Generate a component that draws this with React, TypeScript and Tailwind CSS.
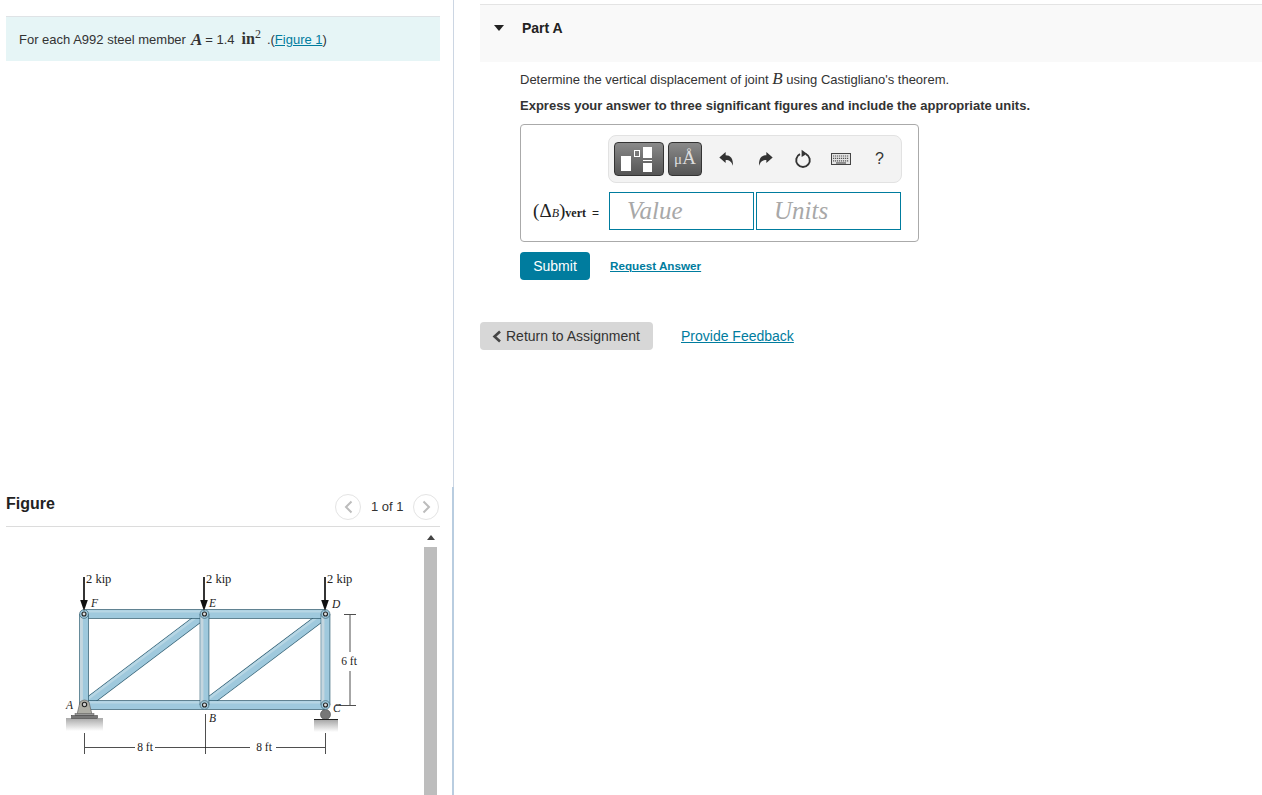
import React from "react";

const sans = { fontFamily: '"Liberation Sans", Arial, sans-serif' };
const mathFont = { fontFamily: '"Liberation Serif", serif' };

const UndoIcon = ({ flip }: { flip?: boolean }) => (
  <svg width="15" height="16" viewBox="0 0 14 14" className={flip ? "-scale-x-100" : ""}>
    <path d="M0.3 5.5 L6.2 0.4 V3.4 C10.8 3.4 13.4 6.4 13 13.4 C11.8 9.8 10 8 6.2 8 V10.8 Z" fill="#333" />
  </svg>
);

const ResetIcon = () => (
  <svg width="18" height="20" viewBox="0 0 18 19">
    <path d="M6 4.6 A6.8 6.8 0 1 0 12 4.6" fill="none" stroke="#333" strokeWidth="1.9" />
    <path d="M7.6 0.2 L13 4.2 L7.6 7.6 Z" fill="#333" />
  </svg>
);

const KeyboardIcon = () => (
  <svg width="20" height="12" viewBox="0 0 20 12">
    <rect x="0.5" y="0.5" width="19" height="11" fill="#e4e4e4" stroke="#444" />
    <path d="M2 3h16M2 5.4h16" stroke="#555" strokeWidth="1.2" strokeDasharray="1.2 .8" />
    <path d="M2 7.8h16" stroke="#555" strokeWidth="1.2" strokeDasharray="1.2 .8" />
    <path d="M5 10h10" stroke="#555" strokeWidth="1.2" />
  </svg>
);

const Member = ({ x1, y1, x2, y2 }: { x1: number; y1: number; x2: number; y2: number }) => {
  const len = Math.hypot(x2 - x1, y2 - y1);
  // offset along the member's normal, so the lit edge always faces up and left
  let nx = (y2 - y1) / len;
  let ny = -(x2 - x1) / len;
  if (nx + ny > 0) {
    nx = -nx;
    ny = -ny;
  }
  const vertical = x1 === x2;
  return (
    <g>
      <line x1={x1} y1={y1} x2={x2} y2={y2} stroke="#2c5a6e" strokeWidth="9.6" />
      <line x1={x1} y1={y1} x2={x2} y2={y2} stroke="#9fc9dd" strokeWidth="8.2" />
      <line
        x1={x1 + nx * 2.6}
        y1={y1 + ny * 2.6}
        x2={x2 + nx * 2.6}
        y2={y2 + ny * 2.6}
        stroke={vertical ? "#c4d6df" : "#b7d6e4"}
        strokeWidth={vertical ? 3 : 2.4}
      />
    </g>
  );
};

const Pin = ({ x, y }: { x: number; y: number }) => (
  <g>
    <circle cx={x} cy={y} r="4.4" fill="#9fc9dd" stroke="#3d6475" strokeWidth="0.7" />
    <circle cx={x} cy={y} r="2" fill="#ddd" stroke="#222" strokeWidth="1.1" />
  </g>
);

const Load = ({ x, label }: { x: number; label: string }) => (
  <g>
    <line x1={x} y1="577" x2={x} y2="602" stroke="#111" strokeWidth="1.7" />
    <path d={`M${x - 3.8} 600 L${x + 3.8} 600 L${x} 611 Z`} fill="#111" />
    <text x={x + 2} y="583" fontSize="12.5" fill="#222" fontFamily="Liberation Serif, serif">{label}</text>
  </g>
);

const Truss = () => {
  const serif = "Liberation Serif, serif";
  return (
    <svg width="370" height="240" viewBox="0 556 370 240" className="block">
      <defs>
        <linearGradient id="ground" x1="0" y1="0" x2="0" y2="1">
          <stop offset="0" stopColor="#a8a8a8" />
          <stop offset="1" stopColor="#ffffff" />
        </linearGradient>
      </defs>
      <rect x="66" y="718" width="37" height="13" fill="url(#ground)" />
      <rect x="314" y="720" width="24" height="12" fill="url(#ground)" />

      <Member x1={204.5} y1={614} x2={84} y2={705} />
      <Member x1={325.5} y1={614} x2={204.5} y2={705} />
      <Member x1={84} y1={705} x2={325.5} y2={705} />
      <Member x1={84} y1={614} x2={325.5} y2={614} />
      <Member x1={84} y1={614} x2={84} y2={705} />
      <Member x1={204.5} y1={614} x2={204.5} y2={705} />
      <Member x1={325.5} y1={614} x2={325.5} y2={705} />

      <path d="M80 702 Q84.5 698 89 702 L92 714.5 H77 Z" fill="#aeaea6" stroke="#555" strokeWidth="0.6" />
      <rect x="75" y="713.5" width="19" height="2" fill="#999" stroke="#444" strokeWidth="0.4" />
      <rect x="71.5" y="715.5" width="26" height="2.8" fill="#777" stroke="#333" strokeWidth="0.5" />
      <circle cx="325.5" cy="714.5" r="5" fill="#777" stroke="#444" strokeWidth="0.6" />
      <line x1="314" y1="719.5" x2="338" y2="719.5" stroke="#222" />

      <Pin x={84} y={614} />
      <Pin x={204.5} y={614} />
      <Pin x={325.5} y={614} />
      <circle cx="84.5" cy="704.5" r="2.2" fill="#ccc" stroke="#222" strokeWidth="1.1" />
      <Pin x={204.5} y={705} />
      <Pin x={325.5} y={705} />

      <Load x={84} label="2 kip" />
      <Load x={204} label="2 kip" />
      <Load x={325} label="2 kip" />

      <g fontFamily={serif} fontSize="11.5" fontStyle="italic" fill="#222">
        <text x="91" y="607">F</text>
        <text x="209" y="607">E</text>
        <text x="332" y="608">D</text>
        <text x="66" y="709">A</text>
        <text x="209" y="722">B</text>
        <text x="333" y="712">C</text>
      </g>

      <g stroke="#222" strokeWidth="0.8">
        <line x1="344" y1="614.5" x2="356" y2="614.5" />
        <line x1="336" y1="705.5" x2="356" y2="705.5" />
        <line x1="350" y1="615" x2="350" y2="652" />
        <line x1="350" y1="671" x2="350" y2="705" />
        <line x1="84.5" y1="733" x2="84.5" y2="754" />
        <line x1="205.5" y1="714" x2="205.5" y2="754" />
        <line x1="325.5" y1="733" x2="325.5" y2="754" />
        <line x1="85" y1="747.5" x2="135" y2="747.5" />
        <line x1="155" y1="747.5" x2="250" y2="747.5" />
        <line x1="276" y1="747.5" x2="325" y2="747.5" />
      </g>
      <g fontFamily={serif} fontSize="11.5" fill="#222" textAnchor="middle">
        <text x="349" y="665">6 ft</text>
        <text x="145" y="751">8 ft</text>
        <text x="264" y="751">8 ft</text>
      </g>
    </svg>
  );
};

export default function App() {
  return (
    <div className="flex h-[795px] w-[1262px] overflow-hidden bg-white text-[13px] text-[#333]" style={sans}>
      {/* left column */}
      <div className="relative flex w-[454px] shrink-0 flex-col border-r border-[#ccd6e3] pl-1.5 pr-[13px]">
        <div className="absolute right-[-1px] top-[487px] bottom-0 w-[2px] bg-[#b9cde0]" />
        <div className="mt-4 flex h-[45px] shrink-0 items-center border-t border-[#dfe3e6] bg-[#e6f5f6] pl-[13px] leading-none">
          <span>For each A992 steel member</span>
          <span className="ml-[5px] text-[17px] font-bold italic" style={mathFont}>A</span>
          <span className="ml-[3px]">= 1.4</span>
          <span className="ml-[7px] text-[16px] font-bold" style={mathFont}>in</span>
          <span className="-mt-2.5 text-[12px]" style={mathFont}>2</span>
          <span className="ml-[6px]">.(</span>
          <a className="text-[#007c9e] underline">Figure 1</a>
          <span>)</span>
        </div>

        <div className="mt-[425px] flex h-[41px] shrink-0 items-center justify-between border-b border-[#dcdcdc] pb-[5px]">
          <h2 className="text-base font-bold text-[#222]">Figure</h2>
          <div className="flex items-center gap-[9.5px] pr-px pt-1.5">
            <button className="flex size-[26px] items-center justify-center rounded-full border border-[#e4e4e4]">
              <svg width="9" height="14" viewBox="0 0 9 14"><path d="M7.5 1.5 L2 7 L7.5 12.5" fill="none" stroke="#bcbcbc" strokeWidth="2" /></svg>
            </button>
            <span className="text-[#333]">1 of 1</span>
            <button className="flex size-[26px] items-center justify-center rounded-full border border-[#e4e4e4]">
              <svg width="9" height="14" viewBox="0 0 9 14"><path d="M1.5 1.5 L7 7 L1.5 12.5" fill="none" stroke="#bcbcbc" strokeWidth="2" /></svg>
            </button>
          </div>
        </div>

        <div className="relative flex min-h-0 flex-1">
          <div className="-ml-1.5 mt-[29px]">
            <Truss />
          </div>
          <div className="absolute right-[2px] top-0 flex h-full w-[15px] flex-col items-center">
            <svg width="8" height="5" viewBox="0 0 8 5" className="mt-2"><path d="M0 5 L4 0 L8 5 Z" fill="#444" /></svg>
            <div className="mt-[7px] w-[13px] flex-1 bg-[#bdbdbd]" />
          </div>
        </div>
      </div>

      {/* right column */}
      <div className="flex-1 pl-[26px] pt-1">
        <div className="flex h-[58px] border-t border-[#e4e4e4] bg-[#f9f9f9] pl-[14px] pt-[15px]">
          <svg width="10" height="6" viewBox="0 0 10 6" className="mt-[5px]"><path d="M0 0 H10 L5 6 Z" fill="#222" /></svg>
          <span className="ml-[18px] text-sm font-bold leading-4 text-[#222]">Part A</span>
        </div>

        <div className="pl-10">
          <p className="mt-[9px] leading-4">
            Determine the vertical displacement of joint{" "}
            <span className="text-[17px] italic" style={mathFont}>B</span> using Castigliano&apos;s theorem.
          </p>
          <p className="mt-2.5 font-bold leading-4">Express your answer to three significant figures and include the appropriate units.</p>

          <div className="mt-2.5 flex h-[118px] w-[399px] flex-col rounded border border-[#aaa] pt-2.5">
            <div className="ml-[87px] flex h-[48px] w-[294px] items-center rounded-lg border border-[#e2e2e2] bg-[#f3f3f3] pl-[5px]">
              <div className="flex h-[34px] w-[50px] items-center justify-center gap-[3px] rounded border border-[#333] bg-gradient-to-b from-[#8a8a8a] to-[#555] pr-[5px]">
                <div className="mt-[9px] h-[15px] w-[10px] bg-white" />
                <div className="mb-[11px] h-[7px] w-[6px] border border-white" />
                <div className="flex flex-col gap-[2px]">
                  <div className="h-[11px] w-[9px] bg-white" />
                  <div className="h-px w-[9px] bg-white" />
                  <div className="h-[9px] w-[9px] bg-white" />
                </div>
              </div>
              <div className="ml-[4px] flex h-[34px] w-[34px] items-baseline justify-center rounded border border-[#333] bg-gradient-to-b from-[#8a8a8a] to-[#555] pt-[5px] text-[#ddd]" style={mathFont}>
                <span className="text-[15px]">μ</span>
                <span className="text-[19px] leading-none">Å</span>
              </div>
              <div className="ml-[17px] flex"><UndoIcon /></div>
              <div className="ml-[24px] flex"><UndoIcon flip /></div>
              <div className="ml-[21px] flex"><ResetIcon /></div>
              <div className="ml-[19px] flex"><KeyboardIcon /></div>
              <span className="ml-[24px] text-base text-[#333]">?</span>
            </div>

            <div className="mt-[9px] flex items-center">
              <div className="flex w-[88px] items-baseline justify-end pr-2.5 text-[#222]" style={mathFont}>
                <span className="text-[19px]">(Δ</span>
                <span className="text-[12px] italic">B</span>
                <span className="text-[19px]">)</span>
                <span className="text-[12px] font-bold">vert</span>
                <span className="ml-1.5 text-xs" style={sans}>=</span>
              </div>
              <div className="flex h-[38px] w-[145px] items-center border border-[#007c9e] pl-[17px] text-[25px] italic text-[#a8a8a8]" style={mathFont}>Value</div>
              <div className="ml-0.5 flex h-[38px] w-[145px] items-center border border-[#007c9e] pl-[17px] text-[25px] italic text-[#a8a8a8]" style={mathFont}>Units</div>
            </div>
          </div>

          <div className="mt-2.5 flex items-center">
            <button className="h-7 w-[70px] rounded-sm bg-[#007c9e] text-sm text-white">Submit</button>
            <a className="ml-5 -mt-px text-[11.7px] font-bold text-[#007c9e] underline">Request Answer</a>
          </div>
        </div>

        <div className="mt-[42px] flex items-center text-sm">
          <button className="flex h-7 w-[173px] items-center rounded-sm bg-[#d7d7d7] pl-3 text-[#333]">
            <svg width="10" height="13" viewBox="0 0 10 13" className="mr-1"><path d="M8 1.5 L2.5 6.5 L8 11.5" fill="none" stroke="#444" strokeWidth="2.6" /></svg>
            Return to Assignment
          </button>
          <a className="ml-7 text-[#007c9e] underline">Provide Feedback</a>
        </div>
      </div>
    </div>
  );
}
